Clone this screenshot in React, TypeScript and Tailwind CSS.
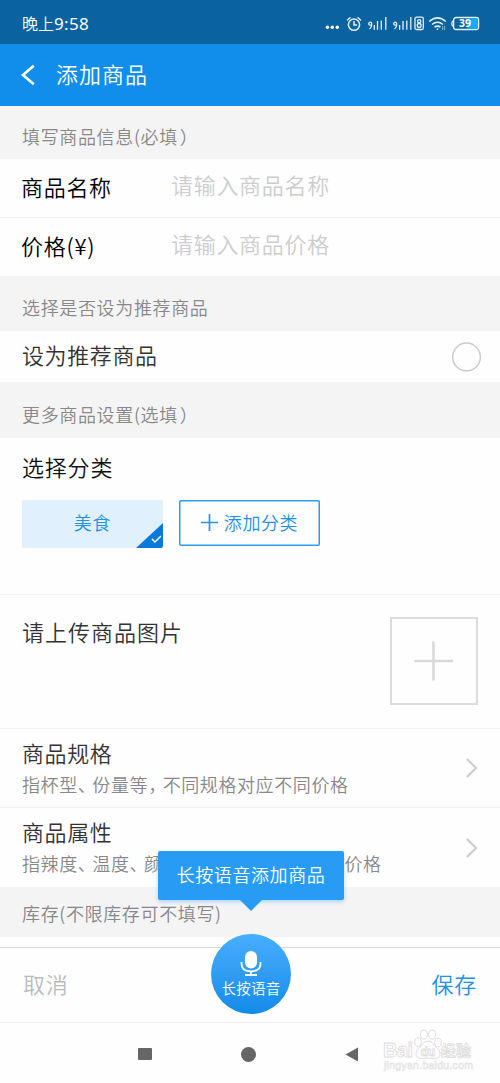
import type { ReactNode } from "react";
import { clsx } from "clsx";

function StatusIcons() {
    return (
        <svg width="156" height="16" viewBox="0 0 156 16" fill="none" stroke="#e6f0f7" strokeWidth="1.300">
            <g fill="#fff" stroke="none">
                <circle cx="3.400" cy="11.300" r="1.700" />
                <circle cx="8.300" cy="11.300" r="1.700" />
                <circle cx="13.300" cy="11.300" r="1.700" />
            </g>
            <g strokeLinecap="round" strokeWidth="1.500">
                <circle cx="30" cy="8.700" r="5.600" />
                <path d="M30 5.500v3.500h2.500M23.500 4L26 1.800M36.500 4L34 1.800" />
            </g>
            <circle cx="46.200" cy="7.700" r="1.500" />
            <path d="M47.700 8.500Q47.700 11.500 45.500 13M50.300 9v4.800M53.500 5v8.800M57.300 4.500v9.300M61.800 1v12.800" />
            <circle cx="71.200" cy="7.700" r="1.500" />
            <path d="M72.700 8.500Q72.700 11.500 70.500 13M75.600 9v4.800M79 5v8.800M82.800 4.500v9.300M86.800 1v12.800" />
            <rect x="91" y="1.200" width="8.300" height="12.300" rx="1.500" />
            <circle cx="95.200" cy="5.200" r="1.600" />
            <circle cx="95.200" cy="9.400" r="1.900" />
            <path d="M105.200 5.500Q113.500-1.800 121.800 5.500M108 8.500Q113.500 4 119 8.500M110.500 11.200Q113.500 9 116.500 11.200" strokeWidth="1.600" />
            <circle cx="113.500" cy="13.200" r=".9" fill="#e6f0f7" stroke="none" />
            <path d="M118.700 10v4M120.700 10v4" strokeWidth=".6" />
            <path d="M129.500 4.500Q127.800 5 127.800 7.500T129.500 10.500" />
            <rect x="129.600" y="1.500" width="25" height="12" rx="2.500" />
            <path d="M143.500 2.200h9q1.500 0 1.500 1.500v7.600q0 1.500-1.500 1.500h-9z" fill="#10aefb" stroke="none" />
            <text x="141" y="11.300" textAnchor="middle" fontFamily="Noto Sans" fontSize="10.500" fontWeight="700" fill="#fff" stroke="none">39</text>
        </svg>
    );
}

function StatusBar() {
    return (
        <div className="flex h-11 items-center justify-between bg-[#0b62a0] pr-5 pl-[22px] text-white">
            <span className="pt-[3px] text-[16px] leading-6 font-[350]">
                晚上<span className="font-['Noto_Sans'] text-[17px] font-normal tracking-[0.3px]">9:58</span>
            </span>
            <div className="pt-1">
                <StatusIcons />
            </div>
        </div>
    );
}

function Header() {
    return (
        <header className="flex h-[62px] items-center bg-[#118eea] pl-[21px] text-white">
            <svg width="14" height="22" viewBox="0 0 14 22" fill="none" stroke="#fff" strokeWidth="2.600">
                <path d="M12.800 1.800L2 11l10.800 9.200" />
            </svg>
            <h1 className="pb-1 pl-[21px] text-[22px] leading-[30px] font-[350] tracking-[1px]">添加商品</h1>
        </header>
    );
}

function SectionTitle({ className, children }: { className: string; children: ReactNode }) {
    return (
        <div className={clsx("bg-[#f4f4f4] pl-[22px] text-[18px] leading-6 font-[350] tracking-[0.65px] text-[#888]", className)}>
            {children}
        </div>
    );
}

function Field({ label, placeholder, className }: { label: string; placeholder: string; className?: string }) {
    return (
        <div className={clsx("flex pl-[21px] text-[22px] leading-8 font-[350] tracking-[0.7px]", className)}>
            <span className="w-[150px] pt-[11px] text-black">{label}</span>
            <span className="pt-[9px] text-[#cdcdcd]">{placeholder}</span>
        </div>
    );
}

// Chinese punctuation set narrower than the full-width cell
function Mark({ children }: { children: ReactNode }) {
    return <span className="tracking-[-3.5px]">{children}</span>;
}

function LinkRow({ title, className, children }: { title: string; className: string; children: ReactNode }) {
    return (
        <div className={clsx("flex items-center justify-between pr-[22px] pl-[22px]", className)}>
            <div className="whitespace-nowrap">
                <div className="text-[22px] leading-[31px] font-[350] tracking-[0.6px] text-[#333]">{title}</div>
                <div className="text-[18px] leading-8 font-[350] tracking-[0.6px] text-[#888]">{children}</div>
            </div>
            <svg width="13" height="20" viewBox="0 0 13 20" fill="none" stroke="#cacaca" strokeWidth="1.900">
                <path d="M2 1l9 9-9 9" />
            </svg>
        </div>
    );
}

function Categories() {
    return (
        <section className="h-[157px] border-b border-[#f3f3f3] px-[22px] pt-3">
            <h2 className="text-[22px] leading-8 font-[350] tracking-[0.8px] text-[#111]">选择分类</h2>
            <div className="mt-[18px] flex items-start gap-4">
                <button className="relative h-12 w-[141px] rounded-[2px] bg-[#e1f0fd] pb-[3px] text-[18px] font-[350] tracking-[0.65px] text-[#2292e8]">
                    美食
                    <svg className="absolute right-0 bottom-0" width="27" height="25" viewBox="0 0 27 25">
                        <path d="M27 0v23q0 2-2 2H0z" fill="#0878db" />
                        <path d="M16 16l3 3 6-6" fill="none" stroke="#fff" strokeWidth="1.500" />
                    </svg>
                </button>
                <button className="flex h-[46px] w-[141px] items-center justify-center rounded-[2px] pb-[1px] text-[18px] font-[350] tracking-[0.6px] text-[#2292e8] shadow-[inset_0_0_0_1.5px_#2a9bf0]">
                    <svg className="mr-[6px]" width="17" height="17" viewBox="0 0 17 17" stroke="#2a94e8" strokeWidth="1.700">
                        <path d="M8.500 0v17M0 8.500h17" />
                    </svg>
                    添加分类
                </button>
            </div>
        </section>
    );
}

function Upload() {
    return (
        <section className="flex h-[134px] justify-between border-b border-[#f3f3f3] pr-[22px] pl-[22px]">
            <span className="pt-[20px] text-[22px] leading-8 font-[350] tracking-[1px] text-[#333]">请上传商品图片</span>
            <div className="mt-[22px] flex size-[88px] items-center justify-center border-2 border-[#dcdcdc]">
                <svg width="40" height="40" viewBox="0 0 40 40" stroke="#d9d9d9" strokeWidth="2.600">
                    <path d="M19.500 .5v39M.5 20h38.500" />
                </svg>
            </div>
        </section>
    );
}

function VoiceTip() {
    return (
        <div className="absolute top-[851px] left-[158px] h-[49px] w-[186px] rounded-[2px] bg-[#289cf5] text-center text-[18px] leading-[46px] font-[350] tracking-[0.6px] text-white shadow-[0_2px_4px_rgba(40,156,245,0.35)]">
            长按语音添加商品
            <svg className="absolute top-12 left-[81px]" width="24" height="13" viewBox="0 0 24 13">
                <path d="M0 0h24L12 12z" fill="#289cf5" />
            </svg>
        </div>
    );
}

function VoiceButton() {
    return (
        <button className="absolute top-[934px] left-[211px] flex size-20 flex-col items-center rounded-full bg-linear-to-b from-[#46aefe] to-[#118be8] pt-[16px] text-white">
            <svg width="22" height="27" viewBox="0 0 22 27" fill="none" stroke="#fff" strokeWidth="1.800">
                <rect x="5" y="1" width="12" height="17.500" rx="6" fill="#fff" stroke="none" />
                <path d="M1.500 12v1.500q0 7.800 9.500 7.800t9.500-7.800V12M11 21v4M5 25h12" />
            </svg>
            <span className="mt-[1px] text-[14.5px] leading-[19px] font-[350] tracking-[0.2px]">长按语音</span>
        </button>
    );
}

function Watermark() {
    return (
        <svg className="absolute top-[1028px] left-[383px]" width="92" height="46" viewBox="0 0 92 46" fill="#fff" stroke="#dcdcdc" strokeWidth="1">
            <ellipse cx="35" cy="14" rx="3.300" ry="4.300" />
            <ellipse cx="41" cy="6.500" rx="3.500" ry="4.500" />
            <ellipse cx="49" cy="6.500" rx="3.500" ry="4.500" />
            <ellipse cx="55" cy="14.500" rx="3.300" ry="4.300" />
            <path d="M45 13q-4 0-7 5-5 4-5 7.500 0 5 6 5 6-1 12 0 6 0 6-5 0-3.500-5-7.500-3-5-7-5z" />
            <g fontFamily="Liberation Sans" fontWeight="700" strokeWidth=".8">
                <text x="0" y="29" fontSize="20" textLength="30">Bai</text>
                <text x="37.500" y="28" fontSize="12">du</text>
                <text x="58" y="28" fontSize="15" fontFamily="Noto Sans CJK SC">经验</text>
                <text x="1" y="41" fontSize="10.500" fontWeight="400" strokeWidth=".6" stroke="#e2e2e2" textLength="89">jingyan.baidu.com</text>
            </g>
        </svg>
    );
}

export default function App() {
    return (
        <div className="relative h-[1083px] w-[500px] overflow-hidden bg-[#fefefe] font-['Noto_Sans_CJK_SC',sans-serif]">
            <StatusBar />
            <Header />
            <SectionTitle className="h-[53px] pt-[18px]">填写商品信息(必填<span className="pl-[2px]">）</span></SectionTitle>
            <Field className="h-[59px] border-b border-[#f1f1f1]" label="商品名称" placeholder="请输入商品名称" />
            <Field className="h-[58px]" label="价格(¥)" placeholder="请输入商品价格" />
            <SectionTitle className="h-[55px] pt-[19px]">选择是否设为推荐商品</SectionTitle>
            <div className="flex h-[51px] items-center justify-between pr-[19px] pl-[22px]">
                <span className="pb-[5px] text-[22px] leading-8 font-[350] tracking-[0.6px] text-[#333]">设为推荐商品</span>
                <svg width="30" height="30" viewBox="0 0 30 30">
                    <circle cx="15.500" cy="15" r="13.900" fill="none" stroke="#cbcbcb" strokeWidth="1.500" />
                </svg>
            </div>
            <SectionTitle className="h-[56px] pt-5">更多商品设置(选填<span className="pl-[2px]">）</span></SectionTitle>
            <Categories />
            <Upload />
            <LinkRow className="h-[79px] border-b border-[#f1f1f1]" title="商品规格">
                指杯型<Mark>、</Mark>份量等<Mark>，</Mark>不同规格对应不同价格
            </LinkRow>
            <LinkRow className="h-[79px]" title="商品属性">
                指辣度<Mark>、</Mark>温度<Mark>、</Mark>颜色<Mark>，</Mark>不同属性对应不同价格
            </LinkRow>
            <SectionTitle className="h-[50px] pt-[14px]">库存(不限库存可不填写)</SectionTitle>
            <div className="mt-[10px] flex h-[76px] items-center justify-between border-t border-b border-t-[#d8d8d8] border-b-[#f3f3f3] px-[23px] pb-[3px] text-[22px] font-[350] tracking-[0.7px]">
                <span className="text-[#bbb]">取消</span>
                <span className="text-[#1d90e8]">保存</span>
            </div>
            <nav className="flex h-[60px] items-center pt-[2px] pl-[138px]">
                <span className="h-3 w-[14px] rounded-[1px] bg-[#666]" />
                <span className="ml-[89px] size-[15px] rounded-full bg-[#666]" />
                <svg className="ml-[89px]" width="14" height="15" viewBox="0 0 14 15">
                    <path d="M13 .5v14L.5 7.500z" fill="#666" />
                </svg>
            </nav>
            <VoiceTip />
            <VoiceButton />
            <Watermark />
        </div>
    );
}
